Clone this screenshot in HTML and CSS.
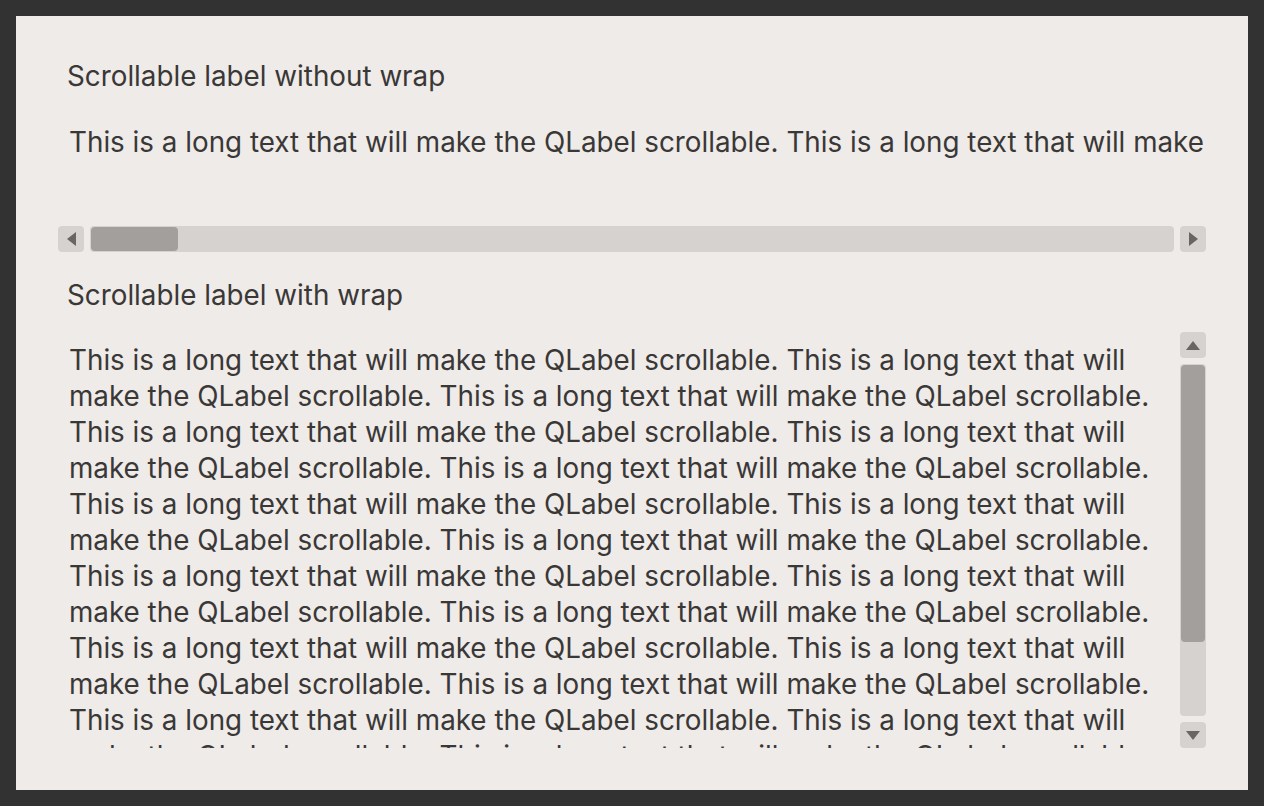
FILE: index.html
```html
<!DOCTYPE html>
<html lang="en">
<head>
    <meta charset="UTF-8">
    <meta name="viewport" content="width=device-width, initial-scale=1.0">
    <title>Scrollable QLabel</title>
    <link rel="stylesheet" href="styles.css">
</head>
<body>
    <div class="window">
        <div class="title first">Scrollable label without wrap</div>

        <div class="scroll-h">
            <div class="viewport-h">
                <div class="text nowrap" id="nowrap"></div>
            </div>
            <div class="hbar">
                <div class="btn"><span class="arrow left"></span></div>
                <div class="track">
                    <div class="thumb-h"></div>
                </div>
                <div class="btn"><span class="arrow right"></span></div>
            </div>
        </div>

        <div class="title second">Scrollable label with wrap</div>

        <div class="scroll-v">
            <div class="viewport-v">
                <div class="text" id="wrap"></div>
            </div>
            <div class="vbar">
                <div class="btn"><span class="arrow up"></span></div>
                <div class="track">
                    <div class="thumb-v"></div>
                </div>
                <div class="btn"><span class="arrow down"></span></div>
            </div>
        </div>
    </div>

    <script>
        const frase = "This is a long text that will make the QLabel scrollable. ";
        document.getElementById('nowrap').textContent = frase.repeat(4).trim();
        document.getElementById('wrap').textContent = frase.repeat(24).trim();
    </script>
</body>
</html>
```

FILE: styles.css
```css
body {
    margin: 0;
    padding: 16px;
    background: #323232;
    font-family: Inter, "Noto Sans", sans-serif;
    color: #3a3837;
}
.window {
    background: #efebe8;
    height: 774px;
    padding: 0 42px;
    box-sizing: border-box;
    overflow: hidden;
}
.title {
    font-size: 27.8px;
    line-height: 36px;
    padding-left: 9px;
}
.title.first {
    padding-top: 42px;
}
.title.second {
    padding-top: 25px;
}
.text {
    font-size: 27.8px;
    line-height: 36px;
    padding: 0 11px;
}
.nowrap {
    white-space: nowrap;
}

/* sem quebra */
.viewport-h {
    height: 132px;
    overflow: hidden;
    padding-top: 30px;
    box-sizing: border-box;
}
.hbar {
    display: flex;
    gap: 6px;
    height: 26px;
}
.hbar .btn {
    width: 26px;
}
.hbar .track {
    flex: 1;
    padding: 1px;
}
.thumb-h {
    width: 87px;
    height: 100%;
}

/* com quebra */
.scroll-v {
    margin-top: 19px;
    display: grid;
    grid-template-columns: 1fr 26px;
    gap: 8px;
    height: 416px;
}
.viewport-v {
    overflow: hidden;
    padding-top: 10px;
}
.vbar {
    display: flex;
    flex-direction: column;
    gap: 6px;
}
.vbar .btn {
    height: 26px;
}
.vbar .track {
    flex: 1;
    padding: 1px;
}
.thumb-v {
    height: 277px;
    width: 100%;
}

.btn, .track {
    background: #d6d2cf;
    border-radius: 4px;
    box-sizing: border-box;
}
.btn {
    display: flex;
    align-items: center;
    justify-content: center;
}
.thumb-h, .thumb-v {
    background: #a39f9c;
    border-radius: 4px;
}
.arrow {
    width: 0;
    height: 0;
    border: 7px solid transparent;
}
.arrow.left {
    border-right: 9px solid #686563;
    border-left-width: 0;
}
.arrow.right {
    border-left: 9px solid #686563;
    border-right-width: 0;
}
.arrow.up {
    border-bottom: 9px solid #686563;
    border-top-width: 0;
}
.arrow.down {
    border-top: 9px solid #686563;
    border-bottom-width: 0;
}
```
